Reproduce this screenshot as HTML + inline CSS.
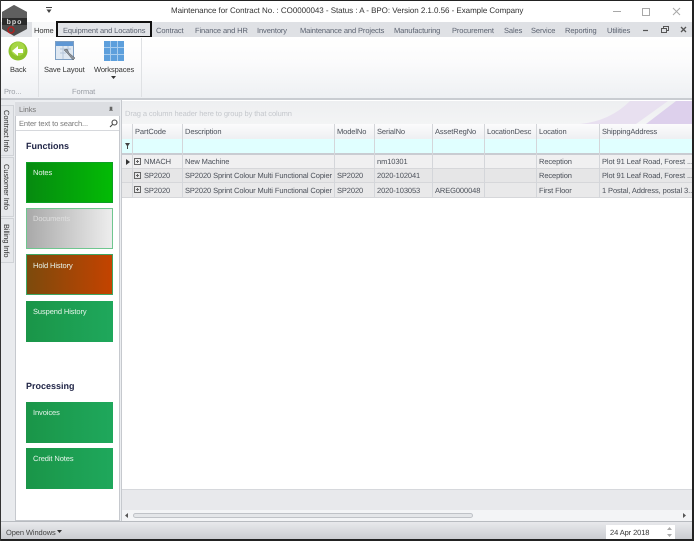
<!DOCTYPE html>
<html><head><meta charset="utf-8">
<style>
html,body{margin:0;padding:0;background:#eceef1}
body{width:694px;height:541px;position:relative;overflow:hidden;background:#eceef1;font-family:"Liberation Sans",sans-serif;font-size:7.5px;letter-spacing:-.1px;color:#444;text-rendering:geometricPrecision;filter:blur(.3px)}
div,span.t{position:absolute;box-sizing:border-box}
.t{white-space:nowrap;line-height:10px}
.tab{top:26px;color:#5b6270}
.h{top:127px;color:#4a4f58}
.c{color:#4a4f58}
.v{width:1px;background:#d4d6da}
.card{left:26px;width:87px;height:41px;color:#e8f5ec;padding:6px 0 0 7px;line-height:10px}
.g{background:linear-gradient(90deg,#1a9548,#1fa85c)}
.side{writing-mode:vertical-rl;left:0;width:14px;background:#e6e8eb;border:1px solid #cfd2d6;border-left:0;color:#333;line-height:13px;text-align:center;white-space:nowrap}
</style></head><body>
<!-- title bar -->
<div style="left:0;top:0;width:694px;height:22px;background:#fff"></div>
<div class="t" style="left:171px;top:6px;font-size:8px;letter-spacing:-.04px;color:#333">Maintenance for Contract No. : CO0000043 - Status : A - BPO: Version 2.1.0.56 - Example Company</div>
<svg style="position:absolute;left:46px;top:7px" width="6" height="6"><path d="M0.500 2.500h5L3 6z" fill="#444" stroke="none"/><path d="M0 .5h6" stroke="#444"/></svg>
<svg style="position:absolute;left:610px;top:6px" width="80" height="12" fill="none" stroke="#a8a8a8"><path d="M3 5.500h8"/><rect x="32.500" y="2.500" width="7" height="7"/><path d="M63 2l7 7M70 2l-7 7"/></svg>
<!-- tab strip -->
<div style="left:0;top:22px;width:694px;height:15px;background:#dfe1e5"></div>
<div style="left:32px;top:22px;width:24px;height:15px;background:#f7f8f9"></div>
<div style="left:56px;top:21px;width:96px;height:17px;border:2px solid #111;background:#e2e4e8"></div>
<div class="t tab" style="left:34px;color:#333">Home</div>
<div class="t tab" style="left:63px">Equipment and Locations</div>
<div class="t tab" style="left:156px">Contract</div>
<div class="t tab" style="left:195px">Finance and HR</div>
<div class="t tab" style="left:257px">Inventory</div>
<div class="t tab" style="left:300px">Maintenance and Projects</div>
<div class="t tab" style="left:394px">Manufacturing</div>
<div class="t tab" style="left:452px">Procurement</div>
<div class="t tab" style="left:504px">Sales</div>
<div class="t tab" style="left:531px">Service</div>
<div class="t tab" style="left:565px">Reporting</div>
<div class="t tab" style="left:607px">Utilities</div>
<svg style="position:absolute;left:640px;top:24px" width="50" height="11" fill="none" stroke="#555"><path d="M3 6.500h5" stroke-width="1.200"/><rect x="21.500" y="4.500" width="5" height="4"/><path d="M23.500 4.500v-2h5v4h-2"/><path d="M41 3l5 5M46 3l-5 5" stroke-width="1.300"/></svg>
<!-- ribbon -->
<div style="left:0;top:37px;width:694px;height:61px;background:linear-gradient(#fff,#fbfbfc 40%,#eef0f3)"></div>
<div style="left:0;top:98px;width:694px;height:2px;background:#c9ccd1"></div>
<!-- logo -->
<svg style="position:absolute;left:0;top:3px" width="30" height="34"><path d="M14 2L27 9V26L14 33L2 26V9Z" fill="#4c4c4c"/><path d="M14 2L27 9V16H2V9Z" fill="#5f5f5f"/><rect x="2" y="15" width="25" height="7" fill="#2a2a2a"/><text x="14.500" y="21" font-size="7" font-weight="bold" fill="#ddd" text-anchor="middle" font-family="Liberation Sans" letter-spacing="1">bpo</text><circle cx="11" cy="27" r="3" fill="none" stroke="#b02020" stroke-width="1.500"/></svg>
<div class="v" style="left:38px;top:38px;height:59px;background:#dfe1e4"></div>
<div class="v" style="left:141px;top:38px;height:59px;background:#dfe1e4"></div>
<svg style="position:absolute;left:8px;top:41px" width="20" height="20"><circle cx="10" cy="10" r="9.500" fill="#8cc22c"/><circle cx="10" cy="8" r="7" fill="#a6d646"/><path d="M4 10l6-5v3h5v4h-5v3z" fill="#fff"/></svg>
<div class="t" style="left:10px;top:65px;color:#333">Back</div>
<svg style="position:absolute;left:55px;top:41px" width="21" height="21"><rect x="0.500" y="0.500" width="18" height="18" fill="#dfe8f2" stroke="#7d9fc4"/><rect x="1" y="1" width="17" height="4" fill="#5f97d4"/><path d="M5 8h11M5 12h6M8 5v13M13 5v6" stroke="#b5c6da"/><path d="M9 9l4 4 5 6 2-2-6-5-2-4z" fill="#8c949e" stroke="#555" stroke-width=".5"/></svg>
<div class="t" style="left:44px;top:65px;color:#333">Save Layout</div>
<svg style="position:absolute;left:104px;top:41px" width="20" height="20"><rect width="20" height="20" fill="#5d9fdc"/><path d="M0 6.500h20M0 13.500h20M6.500 0v20M13.500 0v20" stroke="#a9cdee"/></svg>
<div class="t" style="left:94px;top:65px;color:#333">Workspaces</div>
<svg style="position:absolute;left:111px;top:76px" width="5" height="3"><path d="M0 0h5L2.500 3z" fill="#333"/></svg>
<div class="t" style="left:4px;top:87px;color:#9a9ea5">Pro...</div>
<div class="t" style="left:72px;top:87px;color:#9a9ea5">Format</div>
<!-- left tabs -->
<div style="left:0;top:100px;width:15px;height:421px;background:#e9ebee"></div>
<div class="side" style="top:105px;height:51px">Contract Info</div>
<div class="side" style="top:157px;height:60px">Customer Info</div>
<div class="side" style="top:218px;height:45px">Billing Info</div>
<!-- links panel -->
<div style="left:15px;top:102px;width:105px;height:419px;background:#fff;border:1px solid #c6c9ce;border-top:0"></div>
<div style="left:15px;top:102px;width:105px;height:14px;background:#dcdee2"></div>
<div class="t" style="left:19px;top:105px;color:#777">Links</div>
<svg style="position:absolute;left:108px;top:106px" width="6" height="6"><path d="M1 4.500h4M2 1h2v3.500H2z" fill="#666" stroke="#666" stroke-width=".6"/></svg>
<div style="left:16px;top:116px;width:103px;height:15px;background:#fff;border-bottom:1px solid #d6d8dc"></div>
<div class="t" style="left:19px;top:119px;color:#777">Enter text to search...</div>
<svg style="position:absolute;left:109px;top:119px" width="9" height="9" fill="none" stroke="#444" stroke-width="1.100"><circle cx="5.500" cy="3.500" r="2.500"/><path d="M3.500 5.500L1 8"/></svg>
<div class="t" style="left:26px;top:141px;font-size:9px;letter-spacing:0;font-weight:bold;color:#1d2244">Functions</div>
<div class="card" style="top:162px;padding:5px 0 0 6px;background:linear-gradient(90deg,#068a10,#03bb05);border:1px solid #0ca024">Notes</div>
<div class="card" style="top:208px;padding:5px 0 0 6px;background:linear-gradient(90deg,#a9a9a9,#ededed);border:1px solid #6fc68f;color:#dedede">Documents</div>
<div class="card" style="top:254px;padding:6px 0 0 6px;background:linear-gradient(90deg,#7c4a0c,#c44300);border:1px solid #3fa765">Hold History</div>
<div class="card g" style="top:301px">Suspend History</div>
<div class="t" style="left:26px;top:381px;font-size:9px;letter-spacing:0;font-weight:bold;color:#1d2244">Processing</div>
<div class="card g" style="top:402px">Invoices</div>
<div class="card g" style="top:448px">Credit Notes</div>
<!-- grid -->
<div style="left:121px;top:100px;width:573px;height:421px;background:#fff;border-left:1px solid #c6c9ce"></div>
<div style="left:122px;top:101px;width:572px;height:23px;background:linear-gradient(#eeeff1,#f3f4f5)"></div>
<svg style="position:absolute;left:580px;top:101px" width="114" height="23"><path d="M0 23Q30 20 50 0H88L56 23Z" fill="#e8e0f0"/><path d="M66 23L96 0H114V23Z" fill="#ddd0ec"/></svg>
<div class="t" style="left:125px;top:109px;color:#c4c7cc">Drag a column header here to group by that column</div>
<div style="left:122px;top:124px;width:572px;height:15px;background:linear-gradient(#fbfbfc,#eeeff2)"></div>
<div style="left:122px;top:139px;width:572px;height:14px;background:#e0ffff"></div>
<div style="left:122px;top:153px;width:572px;height:2px;background:#c9ccd2"></div>
<div style="left:122px;top:155px;width:572px;height:14px;background:#f0f0f1"></div>
<div style="left:122px;top:169px;width:572px;height:14px;background:#e6e6e7"></div>
<div style="left:122px;top:183px;width:572px;height:15px;background:#e9e9ea"></div>
<div style="left:122px;top:168px;width:572px;height:1px;background:#d6d7da"></div>
<div style="left:122px;top:182px;width:572px;height:1px;background:#d6d7da"></div>
<div style="left:122px;top:197px;width:572px;height:1px;background:#d6d7da"></div>
<div class="v" style="left:132px;top:124px;height:74px"></div>
<div class="v" style="left:182px;top:124px;height:74px"></div>
<div class="v" style="left:334px;top:124px;height:74px"></div>
<div class="v" style="left:374px;top:124px;height:74px"></div>
<div class="v" style="left:432px;top:124px;height:74px"></div>
<div class="v" style="left:484px;top:124px;height:74px"></div>
<div class="v" style="left:536px;top:124px;height:74px"></div>
<div class="v" style="left:599px;top:124px;height:74px"></div>
<div class="t h" style="left:135px">PartCode</div>
<div class="t h" style="left:185px">Description</div>
<div class="t h" style="left:337px">ModelNo</div>
<div class="t h" style="left:377px">SerialNo</div>
<div class="t h" style="left:435px">AssetRegNo</div>
<div class="t h" style="left:487px">LocationDesc</div>
<div class="t h" style="left:539px">Location</div>
<div class="t h" style="left:602px">ShippingAddress</div>
<svg style="position:absolute;left:125px;top:143px" width="5" height="6"><path d="M0 0h5L3 3v3H2V3z" fill="#444"/></svg>
<svg style="position:absolute;left:126px;top:159px" width="4" height="6"><path d="M0 0l4 3-4 3z" fill="#333"/></svg>
<svg style="position:absolute;left:134px;top:158px" width="7" height="36" fill="none" stroke="#666"><path d="M.5.500h6v6h-6zM2 3.500h3M3.500 2v3M.5 14.500h6v6h-6zM2 17.500h3M3.500 16v3M.5 28.500h6v6h-6zM2 31.500h3M3.500 30v3"/></svg>
<div class="t c" style="left:144px;top:157px">NMACH</div>
<div class="t c" style="left:185px;top:157px">New Machine</div>
<div class="t c" style="left:377px;top:157px">nm10301</div>
<div class="t c" style="left:539px;top:157px">Reception</div>
<div class="t c" style="left:602px;top:157px">Plot 91 Leaf Road, Forest ...</div>
<div class="t c" style="left:144px;top:171px">SP2020</div>
<div class="t c" style="left:185px;top:171px">SP2020 Sprint Colour Multi Functional Copier</div>
<div class="t c" style="left:337px;top:171px">SP2020</div>
<div class="t c" style="left:377px;top:171px">2020-102041</div>
<div class="t c" style="left:539px;top:171px">Reception</div>
<div class="t c" style="left:602px;top:171px">Plot 91 Leaf Road, Forest ...</div>
<div class="t c" style="left:144px;top:186px">SP2020</div>
<div class="t c" style="left:185px;top:186px">SP2020 Sprint Colour Multi Functional Copier</div>
<div class="t c" style="left:337px;top:186px">SP2020</div>
<div class="t c" style="left:377px;top:186px">2020-103053</div>
<div class="t c" style="left:435px;top:186px">AREG000048</div>
<div class="t c" style="left:539px;top:186px">First Floor</div>
<div class="t c" style="left:602px;top:186px">1 Postal, Address, postal 3...</div>
<!-- footer & scroll -->
<div style="left:122px;top:489px;width:572px;height:21px;background:#e8e9ec;border-top:1px solid #d6d8dc"></div>
<div style="left:122px;top:510px;width:572px;height:11px;background:#f3f4f6"></div>
<div style="left:133px;top:513px;width:340px;height:5px;background:#e4e6e9;border:1px solid #bfc2c7;border-radius:3px"></div>
<svg style="position:absolute;left:125px;top:513px" width="562" height="5"><path d="M3 0v5L0 2.500zM558 0v5l3-2.500z" fill="#555"/></svg>
<!-- status bar -->
<div style="left:0;top:521px;width:694px;height:19px;background:linear-gradient(#e8e9ec,#c9cbcf);border-top:1px solid #b8bbc0"></div>
<div class="t" style="left:6px;top:528px;color:#444">Open Windows</div>
<svg style="position:absolute;left:57px;top:530px" width="5" height="3"><path d="M0 0h5L2.500 3z" fill="#333"/></svg>
<div style="left:606px;top:525px;width:69px;height:14px;background:#fff"></div>
<div class="t" style="left:610px;top:528px;color:#333">24 Apr 2018</div>
<svg style="position:absolute;left:667px;top:527px" width="5" height="10"><path d="M0 3l2.500-3L5 3zM0 7l2.500 3L5 7z" fill="#aaa"/></svg>
<!-- window frame -->
<div style="left:0;top:0;width:694px;height:1px;background:#222"></div>
<div style="left:0;top:539px;width:694px;height:2px;background:#222"></div>
<div style="left:0;top:0;width:1px;height:541px;background:#333"></div>
<div style="left:692px;top:0;width:2px;height:541px;background:#222"></div>
</body></html>
